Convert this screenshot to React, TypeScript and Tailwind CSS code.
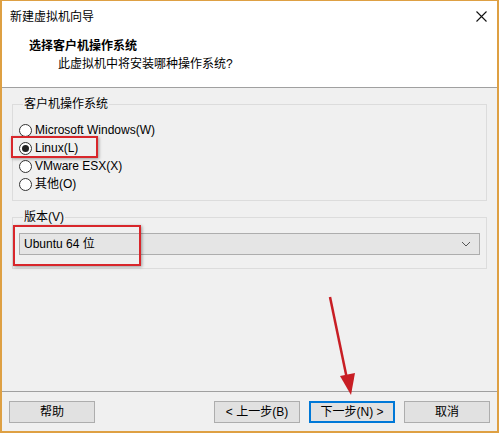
import type { ReactNode } from "react"

const FONT = {
  fontFamily: '"Liberation Sans", "Noto Sans CJK SC", sans-serif',
}

function Radio({ label, checked }: { label: string; checked?: boolean }) {
  return (
    <div className="flex h-[18px] items-center gap-[3px]">
      <span className="flex h-[13px] w-[13px] items-center justify-center rounded-full border border-[#333] bg-white">
        {checked && <span className="h-[7px] w-[7px] rounded-full bg-[#222]" />}
      </span>
      <span>{label}</span>
    </div>
  )
}

function Group({ title, children, className }: { title: string; children: ReactNode; className?: string }) {
  return (
    <fieldset className={`mx-[10px] border border-[#dcdcdc] px-[6px] ${className ?? ""}`}>
      <legend className="ml-[4px] px-[1px] leading-[14px]">{title}</legend>
      {children}
    </fieldset>
  )
}

function Button({ children, primary }: { children: ReactNode; primary?: boolean }) {
  return (
    <button
      type="button"
      className={`flex h-[22px] w-[86px] items-center justify-center bg-[#e1e1e1] text-[12px] ${
        primary ? "border-2 border-[#0078d7]" : "border border-[#adadad]"
      }`}
    >
      {children}
    </button>
  )
}

export default function App() {
  return (
    <div
      className="relative flex h-[433px] w-[499px] flex-col border-2 border-t border-[#dea043] bg-[#f0f0f0] text-[12px] text-black"
      style={FONT}
    >
      {/* Title bar */}
      <div className="flex h-[29px] shrink-0 items-center justify-between bg-white pl-[8px] pr-[9px] pt-[2px]">
        <span>新建虚拟机向导</span>
        <svg width="11" height="11" viewBox="0 0 11 11" className="mr-[1px]">
          <path d="M0.5 0.5 L10.5 10.5 M10.5 0.5 L0.5 10.5" stroke="#111" strokeWidth="1.1" />
        </svg>
      </div>

      {/* Header */}
      <div className="h-[58px] shrink-0 border-b border-[#a0a0a0] bg-white pt-[7px]">
        <div className="pl-[27px] font-bold leading-[18px]">选择客户机操作系统</div>
        <div className="pl-[56px] leading-[18px]">此虚拟机中将安装哪种操作系统?</div>
      </div>

      {/* Body */}
      <div className="flex flex-1 flex-col pt-[9px]">
        <Group title="客户机操作系统" className="h-[104px] pt-[10px]">
          <Radio label="Microsoft Windows(W)" />
          <Radio label="Linux(L)" checked />
          <Radio label="VMware ESX(X)" />
          <Radio label="其他(O)" />
        </Group>

        <Group title="版本(V)" className="mt-[9px] h-[59px] pt-[9px]">
          <div className="flex h-[22px] items-center justify-between border border-[#adadad] bg-[#e5e5e5] pl-[4px] pr-[8px]">
            <span>Ubuntu 64 位</span>
            <svg width="10" height="6" viewBox="0 0 10 6">
              <path d="M1 1 L5 5 L9 1" stroke="#555" strokeWidth="1" fill="none" />
            </svg>
          </div>
        </Group>
      </div>

      {/* Footer */}
      <div className="flex h-[40px] shrink-0 items-start border-t border-[#a0a0a0] px-[7px] pt-[9px]">
        <Button>帮助</Button>
        <div className="ml-auto flex gap-[9px]">
          <div className="flex gap-[9px]">
            <Button>&lt; 上一步(B)</Button>
            <Button primary>下一步(N) &gt;</Button>
          </div>
          <Button>取消</Button>
        </div>
      </div>

      {/* annotations */}
      <div className="pointer-events-none absolute left-[9px] top-[135px] h-[22px] w-[87px] border-2 border-[#d8262b] shadow-[1px_1px_3px_rgba(0,0,0,0.35)]" />
      <div className="pointer-events-none absolute left-[11px] top-[224px] h-[41px] w-[128px] border-2 border-[#d8262b] shadow-[1px_1px_3px_rgba(0,0,0,0.35)]" />
      <svg className="pointer-events-none absolute left-0 top-0" width="499" height="433">
        <line x1="328" y1="296" x2="345" y2="378" stroke="#c81e24" strokeWidth="2.5" />
        <polygon points="338,375 353,372 349,394" fill="#c81e24" />
      </svg>
    </div>
  )
}
